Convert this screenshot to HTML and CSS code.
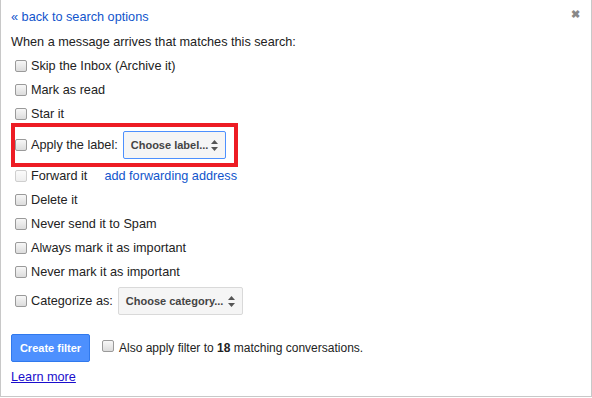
FILE: index.html
```html
<!DOCTYPE html>
<html>
<head>
    <title>Create filter</title>
    <link rel="stylesheet" href="styles.css">
</head>
<body>
    <div id="panel">
        <div class="header">
            <a class="back-link" href="#">&laquo; back to search options</a>
            <span class="close">&#x2716;</span>
        </div>
        <div class="intro">When a message arrives that matches this search:</div>

        <div class="row"><span class="check"></span>Skip the Inbox (Archive it)</div>
        <div class="row"><span class="check"></span>Mark as read</div>
        <div class="row"><span class="check"></span>Star it</div>
        <div class="row highlight-box">
            <span class="check"></span>Apply the label:
            <span class="select focused">Choose label...
                <svg width="7" height="11" viewBox="0 0 7 11"><path d="M3.5 0 L7 4 L0 4 Z M0 7 L7 7 L3.5 11 Z" fill="#555"/></svg>
            </span>
        </div>
        <div class="row"><span class="check disabled"></span>Forward it <a class="forward-link" href="#">add forwarding address</a></div>
        <div class="row"><span class="check"></span>Delete it</div>
        <div class="row"><span class="check"></span>Never send it to Spam</div>
        <div class="row"><span class="check"></span>Always mark it as important</div>
        <div class="row"><span class="check"></span>Never mark it as important</div>
        <div class="row category-row">
            <span class="check"></span>Categorize as:
            <span class="select">Choose category...
                <svg width="7" height="11" viewBox="0 0 7 11"><path d="M3.5 0 L7 4 L0 4 Z M0 7 L7 7 L3.5 11 Z" fill="#555"/></svg>
            </span>
        </div>

        <div class="footer">
            <button class="create-btn">Create filter</button>
            <span class="check"></span>
            <span class="apply-text">Also apply filter to <b>18</b> matching conversations.</span>
        </div>
        <a class="learn-more" href="#">Learn more</a>
    </div>
</body>
</html>
```

FILE: styles.css
```css
body {
    margin: 0;
    padding: 0;
    background-color: #fff;
    font-family: "Liberation Sans", Arial, sans-serif;
    font-size: 12.7px;
    color: #222;
}

#panel {
    width: 570px;
    height: 396px;
    padding: 0 10px;
    border-left: 1px solid #c8c8c8;
    border-right: 1px solid #c8c8c8;
    border-bottom: 1px solid #c8c8c8;
    box-shadow: 1px 0 0 #5e5248;
    box-sizing: content-box;
    display: flex;
    flex-direction: column;
}

.header {
    height: 30px;
    display: flex;
    align-items: center;
    justify-content: space-between;
}

.back-link {
    color: #15c;
    text-decoration: none;
    padding-top: 3px;
}

.close {
    color: #888;
    font-size: 11px;
    font-weight: bold;
    margin-right: 1px;
    margin-bottom: 2px;
}

.intro {
    height: 24px;
    line-height: 24px;
}

.row {
    height: 24px;
    display: flex;
    align-items: center;
    white-space: nowrap;
}

.check {
    width: 10px;
    height: 10px;
    border: 1px solid #9a9a9a;
    border-radius: 2px;
    background: linear-gradient(#f7f7f7, #dcdcdc);
    margin: 0 4px 1px 4px;
    flex-shrink: 0;
}

.check.disabled {
    border-color: #cfcfcf;
    background: linear-gradient(#fbfbfb, #eeeeee);
}

.highlight-box {
    height: 36px;
    width: 219px;
    margin: -3px 0 -3px 0;
    border: 4px solid #ed1c24;
}

.highlight-box .check {
    margin-left: 0;
}

.select {
    display: flex;
    align-items: center;
    justify-content: space-between;
    box-sizing: border-box;
    height: 28px;
    padding: 0 7px 0 7px;
    border: 1px solid #d9d9d9;
    border-radius: 2px;
    background-color: #f5f5f5;
    font-size: 11px;
    font-weight: bold;
    color: #444;
}

.select.focused {
    width: 103px;
    margin-left: 5px;
    border-color: #4d90fe;
}

.category-row {
    height: 34px;
}

.category-row .select {
    width: 125px;
    margin-left: 5px;
}

.footer {
    margin-top: 16px;
    height: 28px;
    display: flex;
    align-items: center;
    white-space: nowrap;
}

.footer .check {
    margin-left: 12px;
    margin-right: 5px;
    margin-bottom: 4px;
}

.apply-text {
    font-size: 12px;
}

.create-btn {
    width: 79px;
    height: 28px;
    border: 1px solid #3079ed;
    border-radius: 2px;
    background-color: #4d90fe;
    color: #fff;
    font-family: "Liberation Sans", Arial, sans-serif;
    font-size: 11px;
    font-weight: bold;
    padding: 0;
}

.forward-link {
    color: #15c;
    text-decoration: none;
    margin-left: 17px;
}

.learn-more {
    margin-top: 8px;
    align-self: flex-start;
    color: #1a0dcc;
    text-decoration: underline;
}
```
